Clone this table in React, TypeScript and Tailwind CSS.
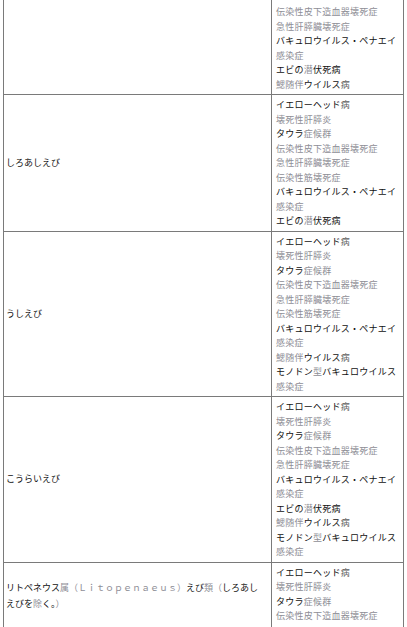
type Tone = 'k' | 'g' | 'm';
type Seg = [string, Tone];

const toneClass: Record<Tone, string> = {
  k: 'text-[#111111]',
  g: 'text-[#8e8e96]',
  m: 'text-[#5c5c5c]',
};

// disease name lines (each entry is one visual line)
const YH: Seg[] = [['イエローヘッド', 'k'], ['病', 'm']];
const NHP: Seg[] = [['壊死性肝膵炎', 'g']];
const TS: Seg[] = [['タウラ', 'k'], ['症候群', 'g']];
const IHHN: Seg[] = [['伝染性皮下造血器壊死症', 'g']];
const AHPND: Seg[] = [['急性肝膵臓壊死症', 'g']];
const IMN: Seg[] = [['伝染性筋壊死症', 'g']];
const BP: Seg[] = [['バキュロウイルス・ペナエイ', 'k']];
const KS: Seg[] = [['感染症', 'g']];
const CMN: Seg[] = [['エビの', 'k'], ['潜', 'g'], ['伏死病', 'k']];
const GAV: Seg[] = [['鰓随伴', 'g'], ['ウイルス', 'k'], ['病', 'm']];
const MBV: Seg[] = [['モノドン', 'k'], ['型', 'g'], ['バキュロウイルス', 'k']];

interface Row {
  name: Seg[][];
  lines: Seg[][];
  first?: boolean;
  last?: boolean;
}

const ROWS: Row[] = [
  { name: [], lines: [IHHN, AHPND, BP, KS, CMN, GAV], first: true },
  { name: [[['しろあしえび', 'k']]], lines: [YH, NHP, TS, IHHN, AHPND, IMN, BP, KS, CMN] },
  { name: [[['うしえび', 'k']]], lines: [YH, NHP, TS, IHHN, AHPND, IMN, BP, KS, GAV, MBV, KS] },
  { name: [[['こうらいえび', 'k']]], lines: [YH, NHP, TS, IHHN, AHPND, BP, KS, CMN, GAV, MBV, KS] },
  {
    name: [
      [
        ['リトペネウス', 'k'],
        ['属（Ｌｉｔｏｐｅｎａｅｕｓ）', 'g'],
        ['えび', 'k'],
        ['類（', 'g'],
        ['しろあし', 'k'],
      ],
      [['えびを', 'k'], ['除', 'g'], ['く。', 'k'], ['）', 'g']],
    ],
    lines: [YH, NHP, TS, IHHN],
    last: true,
  },
];

function Line({ segs }: { segs: Seg[] }) {
  return (
    <div className="whitespace-nowrap">
      {segs.map(([t, tone], i) => (
        <span key={i} className={toneClass[tone]}>
          {t}
        </span>
      ))}
    </div>
  );
}

export default function App() {
  return (
    <div
      className="bg-white w-[407px] h-[627px] overflow-hidden text-[9px] leading-[14.5px]"
      style={{ fontFamily: '"Noto Sans CJK JP", "Noto Sans", sans-serif' }}
    >
      <div className="ml-[3px] w-[401px] border-x border-[#7a7a7a]">
        {ROWS.map((row, ri) => (
          <div key={ri} className="flex border-b border-[#7a7a7a]">
            <div className="w-[268px] shrink-0 border-r border-[#7a7a7a] pl-[2px] flex items-center leading-[16px]">
              <div>
                {row.name.map((segs, i) => (
                  <Line key={i} segs={segs} />
                ))}
              </div>
            </div>
            <div
              className={
                row.first
                  ? 'flex-1 pl-[4px] pt-[5px] pb-[2px] tracking-[0.25px]'
                  : row.last
                    ? 'flex-1 pl-[4px] pt-[3px] pb-[6px] tracking-[0.25px]'
                    : 'flex-1 pl-[4px] pt-[3px] pb-[2px] tracking-[0.25px]'
              }
            >
              {row.lines.map((segs, i) => (
                <Line key={i} segs={segs} />
              ))}
            </div>
          </div>
        ))}
      </div>
    </div>
  );
}
